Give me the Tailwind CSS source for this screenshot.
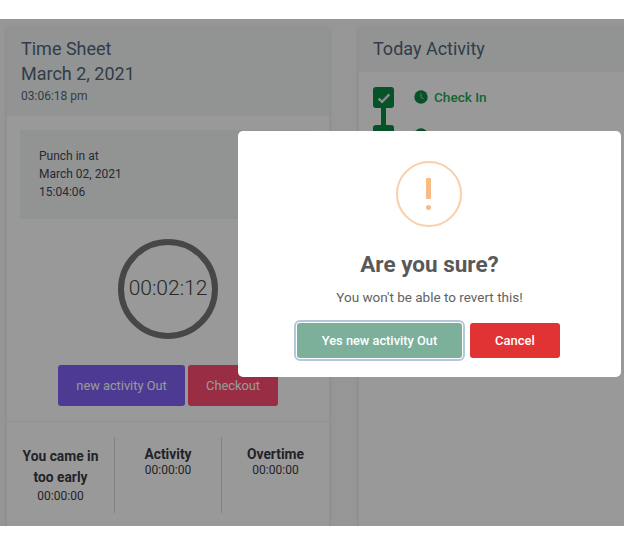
<!DOCTYPE html>
<html>
<head>
<meta charset="utf-8">
<script src="https://cdn.jsdelivr.net/npm/@tailwindcss/browser@4"></script>
</head>
<body class="bg-white font-['Roboto',sans-serif]">
<div class="w-[624px] h-[545px] overflow-hidden bg-white pt-[19px]">
  <div class="relative h-[507px] overflow-hidden bg-[#fafafa]">
    <!-- Page -->
    <div class="flex gap-[28px] pl-[6px] pt-[8px] w-[700px]">
      <!-- Time sheet card -->
      <div class="w-[324px] h-[520px] shrink-0 bg-white border border-black/5 rounded-[3px] shadow-sm">
        <div class="h-[88px] bg-[#f2f7f5] px-[14px] pt-[8px] text-[#54667a]">
          <h2 class="text-[18px] leading-[25px]">Time Sheet</h2>
          <h2 class="text-[18px] leading-[25px]">March 2, 2021</h2>
          <p class="text-[12px] leading-[18px] mt-[1px]">03:06:18 pm</p>
        </div>
        <div class="px-[13px] pt-[14px]">
          <div class="h-[89px] bg-[#f2f7f5] px-[19px] pt-[17px] text-[12px] leading-[18px] text-[#45455a] rounded-[2px]">
            <p>Punch in at</p>
            <p>March 02, 2021</p>
            <p>15:04:06</p>
          </div>
          <div class="w-[100px] h-[100px] mx-auto mt-[20px] rounded-full border-[6px] border-[#777777] flex items-center justify-center text-[21px] font-light text-[#444444]">00:02:12</div>
          <div class="flex justify-center gap-[3px] mt-[26px]">
            <div class="w-[127px] h-[41px] bg-[#7f61f5] rounded-[3px] flex items-center justify-center text-[12.8px] text-white">new activity Out</div>
            <div class="w-[90px] h-[41px] bg-[#ff4b70] rounded-[3px] flex items-center justify-center text-[12.8px] text-white">Checkout</div>
          </div>
        </div>
        <div class="mt-[15px] border-t border-black/5 flex pt-[15px] text-center text-[#3a3a45]">
          <div class="w-[108px] h-[76px] border-r border-black/15 pt-[9px]">
            <p class="text-[13.8px] leading-[21px] font-bold">You came in<br>too early</p>
            <p class="text-[12px] leading-[16px]">00:00:00</p>
          </div>
          <div class="w-[107px] h-[76px] border-r border-black/15 pt-[9px]">
            <p class="text-[13.8px] leading-[17px] font-bold">Activity</p>
            <p class="text-[12px] leading-[14px]">00:00:00</p>
          </div>
          <div class="w-[107px] h-[76px] pt-[9px]">
            <p class="text-[13.8px] leading-[17px] font-bold">Overtime</p>
            <p class="text-[12px] leading-[14px]">00:00:00</p>
          </div>
        </div>
      </div>
      <!-- Today activity card -->
      <div class="w-[324px] h-[520px] shrink-0 bg-white border border-black/5 rounded-[3px] shadow-sm">
        <div class="h-[44px] bg-[#f2f7f5] px-[14px] pb-[4px] flex items-center text-[18px] text-[#54667a]">Today Activity</div>
        <div class="pl-[14px] pt-[15px]">
          <div class="flex items-start">
            <div class="relative w-[21px] h-[21px] bg-[#0b8a43] rounded-[3px] flex items-center justify-center">
              <svg class="w-[14px] h-[14px]" viewBox="0 0 13 13" fill="none" stroke="#e8e8e8" stroke-width="2.2"><path d="M1.5 7l3.2 3L11.5 3.2"/></svg>
              <div class="absolute top-[21px] left-[8px] w-[5px] h-[17px] bg-[#0b8a43]"></div>
            </div>
            <svg class="w-[14px] h-[14px] ml-[20px] mt-[3px]" viewBox="0 0 14 14"><circle cx="7" cy="7" r="6.7" fill="#0b8a43"/><path d="M7 3.2V7.2L9.6 9" fill="none" stroke="#9a9a9a" stroke-width="1.5"/></svg>
            <span class="ml-[6px] text-[13.6px] leading-[20px] font-medium text-[#22a85c]">Check In</span>
          </div>
          <div class="flex items-start mt-[17px]">
            <div class="w-[21px] h-[21px] bg-[#0b8a43] rounded-[3px]"></div>
            <svg class="w-[14px] h-[14px] ml-[20px] mt-[3px]" viewBox="0 0 14 14"><circle cx="7" cy="7" r="6.7" fill="#0b8a43"/></svg>
            <span class="ml-[6px] text-[13.6px] leading-[20px] font-medium text-[#22a85c]">new activity In</span>
          </div>
        </div>
      </div>
    </div>
    <!-- Backdrop -->
    <div class="absolute inset-0 bg-black/40"></div>
    <!-- Alert -->
    <div class="absolute left-[238px] top-[112px] w-[383px] h-[246px] bg-white rounded-[5px] text-center">
      <div class="w-[66px] h-[66px] mx-auto mt-[30px] -translate-x-[1px] rounded-full border-[2px] border-[#facea8] flex items-center justify-center">
        <div class="flex flex-col items-center gap-[6px]">
          <div class="w-[5px] h-[21px] bg-[#f8bb86] rounded-[1px]"></div>
          <div class="w-[5px] h-[5px] bg-[#f8bb86] rounded-full"></div>
        </div>
      </div>
      <h2 class="mt-[21px] text-[22.5px] leading-[32px] font-bold text-[#595959]">Are you sure?</h2>
      <p class="mt-[7px] text-[13.5px] leading-[20px] text-[#626262]">You won't be able to revert this!</p>
      <div class="flex justify-center gap-[8px] mt-[16px] -translate-x-[1px]">
        <div class="w-[165px] h-[35px] bg-[#7cb09b] rounded-[3px] ring-1 ring-white outline-2 outline-offset-1 outline-[#b4c8dc] flex items-center justify-center text-[12.8px] font-medium text-white">Yes new activity Out</div>
        <div class="w-[90px] h-[35px] bg-[#e13333] rounded-[3px] flex items-center justify-center text-[13px] font-medium text-white">Cancel</div>
      </div>
    </div>
  </div>
</div>
</body>
</html>
